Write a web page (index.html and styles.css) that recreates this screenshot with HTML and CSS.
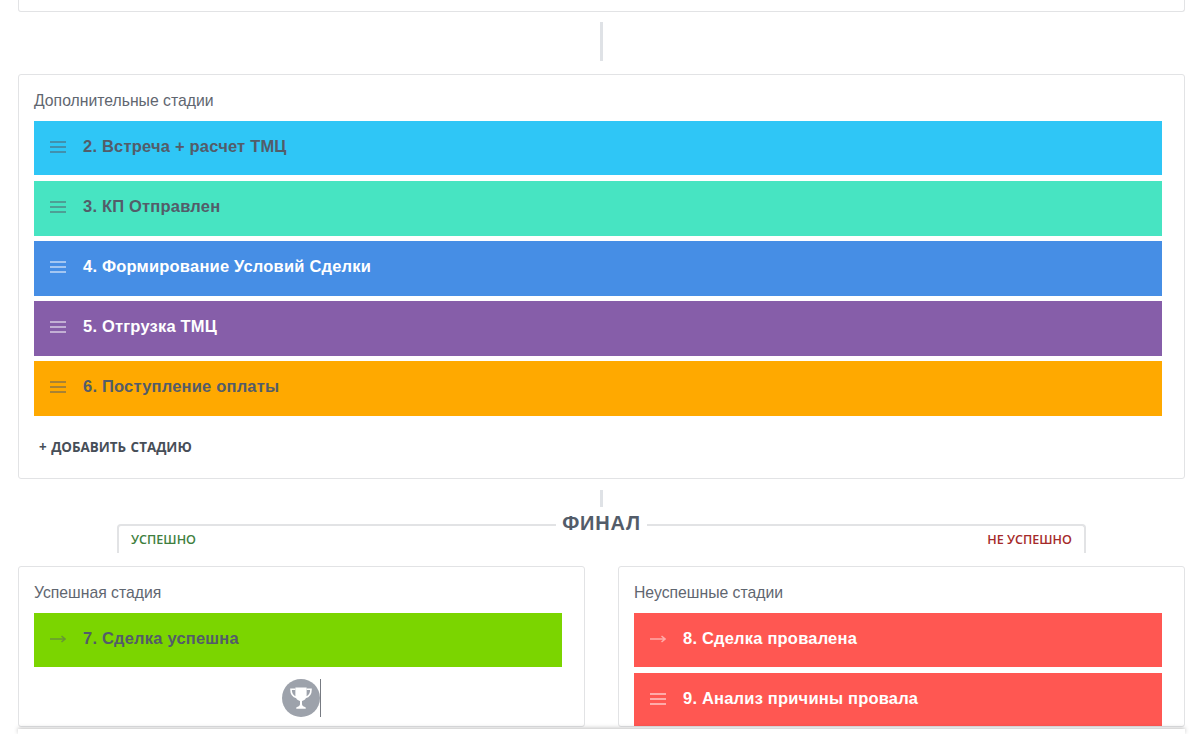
FILE: index.html
```html
<!DOCTYPE html>
<html lang="en">
<head>
    <meta charset="UTF-8">
    <meta name="viewport" content="width=device-width, initial-scale=1.0">
    <title>Стадии сделки</title>
    <link rel="stylesheet" href="styles.css">
</head>
<body>

    <svg class="defs">
        <symbol id="drag" viewBox="0 0 16 12">
            <path d="M0 1h16M0 6h16M0 11h16" stroke="currentColor" stroke-width="2" fill="none"/>
        </symbol>
        <symbol id="arrow" viewBox="0 0 16 12">
            <path d="M0 6h15M11.500 3l3.500 3-3.500 3" stroke="currentColor" stroke-width="1.500" fill="none"/>
        </symbol>
    </svg>

    <div class="page">
        <div class="panel panel-top"></div>
        <div class="connector connector-long"></div>

        <div class="panel panel-extra">
            <div class="panel-title">Дополнительные стадии</div>
            <div class="stages">
                <div class="stage sky"><svg class="stage-icon"><use href="#drag"/></svg>2. Встреча + расчет ТМЦ</div>
                <div class="stage mint"><svg class="stage-icon"><use href="#drag"/></svg>3. КП Отправлен</div>
                <div class="stage blue light"><svg class="stage-icon"><use href="#drag"/></svg>4. Формирование Условий Сделки</div>
                <div class="stage purple light"><svg class="stage-icon"><use href="#drag"/></svg>5. Отгрузка ТМЦ</div>
                <div class="stage orange"><svg class="stage-icon"><use href="#drag"/></svg>6. Поступление оплаты</div>
            </div>
            <div class="add-stage">+ Добавить стадию</div>
        </div>

        <div class="connector connector-short"></div>

        <div class="final">
            <div class="final-title"><span>ФИНАЛ</span></div>
            <div class="final-labels">
                <span class="label-ok">Успешно</span>
                <span class="label-fail">Не успешно</span>
            </div>
        </div>

        <div class="columns">
            <div class="panel panel-final">
                <div class="panel-title">Успешная стадия</div>
                <div class="stage lime"><svg class="stage-icon"><use href="#arrow"/></svg>7. Сделка успешна</div>
                <div class="trophy-row">
                    <div class="trophy">
                        <svg viewBox="0 0 24 24" width="30" height="30">
                            <path d="M7.500 3.500h9v6c0 3-2 4.800-4.500 4.800s-4.500-1.800-4.500-4.800z" fill="#fff"/>
                            <path d="M7.500 5H4c0 3.500 1.500 6 4.500 6.500M16.500 5H20c0 3.500-1.500 6-4.500 6.500" stroke="#fff" stroke-width="1.300" fill="none"/>
                            <path d="M11.200 14h1.600v3c0 1.200 1.500 2 3 2.500v1H8.200v-1c1.500-.5 3-1.300 3-2.500z" fill="#fff"/>
                        </svg>
                    </div>
                </div>
            </div>
            <div class="panel panel-final">
                <div class="panel-title">Неуспешные стадии</div>
                <div class="stages">
                    <div class="stage red light"><svg class="stage-icon"><use href="#arrow"/></svg>8. Сделка провалена</div>
                    <div class="stage red light"><svg class="stage-icon"><use href="#drag"/></svg>9. Анализ причины провала</div>
                </div>
            </div>
        </div>
    </div>

    <div class="bottom-bar"></div>

</body>
</html>
```

FILE: styles.css
```css
body {
    margin: 0;
    height: 734px;
    overflow: hidden;
    background: #fff;
    font-family: "Liberation Sans", Arial, sans-serif;
    color: #535c69;
}
.defs {
    display: none;
}
.page {
    padding: 0 12px 0 18px;
}

.panel {
    box-sizing: border-box;
    background: #fff;
    border: 1px solid #e2e3e5;
    border-radius: 3px;
    padding: 16px 22px 0 15px;
}
.panel-top {
    height: 12px;
    padding: 0;
    border-top: none;
    border-radius: 0 0 3px 3px;
}
.panel-extra {
    height: 405px;
}
.panel-final {
    height: 161px;
    overflow: hidden;
}
.panel-title {
    font-size: 15.750px;
    line-height: 20px;
    height: 29.600px;
    color: #5f6670;
}

/* Connectors */
.connector {
    width: 3px;
    background: #dfe2e6;
    margin-left: 582px;
}
.connector-long {
    height: 39px;
    margin-top: 10px;
    margin-bottom: 13px;
}
.connector-short {
    height: 17px;
    margin-top: 11px;
}

/* Stages */
.stages {
    display: flex;
    flex-direction: column;
    gap: 5.250px;
}
.stage {
    display: flex;
    align-items: center;
    height: 54.850px;
    padding-left: 16px;
    padding-bottom: 3px;
    box-sizing: border-box;
    font-size: 16.500px;
    font-weight: bold;
    letter-spacing: 0.200px;
}
.stage-icon {
    width: 16px;
    height: 12px;
    margin-right: 17px;
    margin-top: 1px;
    opacity: 0.5;
    flex-shrink: 0;
}
.light { color: #fff; }
.sky { background: #2fc6f6; }
.mint { background: #47e4c2; }
.blue { background: #468ee5; }
.purple { background: #865ea9; }
.orange { background: #ffa900; }
.lime { background: #7bd500; }
.red { background: #ff5752; }

.add-stage {
    margin: 21px 0 0 5px;
    font-family: "Open Sans", sans-serif;
    font-size: 13.400px;
    line-height: 20px;
    font-weight: 700;
    word-spacing: 1px;
    text-transform: uppercase;
    color: #474e58;
}

/* Final bracket */
.final {
    box-sizing: border-box;
    height: 29px;
    margin: 17px 99px 13px;
    border: solid #e2e3e5;
    border-width: 2px 2px 0 2px;
    border-radius: 4px 4px 0 0;
    padding: 0 12px;
}
.final-title {
    display: flex;
    justify-content: center;
    height: 0;
}
.final-title span {
    height: 24px;
    margin-top: -15px;
    padding: 0 6px;
    background: #fff;
    font-size: 20px;
    line-height: 24px;
    font-weight: bold;
    letter-spacing: 0.800px;
}
.final-labels {
    display: flex;
    justify-content: space-between;
    padding-top: 5px;
    font-family: "Open Sans", sans-serif;
    font-size: 12.600px;
    line-height: 18px;
    font-weight: 600;
    text-transform: uppercase;
}
.label-ok { color: #3f7f3f; }
.label-fail { color: #a52a2a; }

.columns {
    display: grid;
    grid-template-columns: 567px 567px;
    gap: 33px;
}

.trophy-row {
    display: flex;
    justify-content: center;
    margin-top: 11.500px;
}
.trophy {
    display: flex;
    align-items: center;
    justify-content: center;
    width: 38px;
    height: 38px;
    margin-left: 5px;
    border-radius: 50%;
    background: #9da2ab;
    position: relative;
}
/* caret next to the icon */
.trophy::after {
    content: "";
    position: absolute;
    top: 0;
    right: -1px;
    width: 1px;
    height: 38px;
    background: #777b82;
}

.bottom-bar {
    position: fixed;
    left: 18px;
    right: 12px;
    top: 729px;
    height: 5px;
    background: #fff;
    box-shadow: 0 -1px 4px rgba(0, 0, 0, 0.25);
}
```
